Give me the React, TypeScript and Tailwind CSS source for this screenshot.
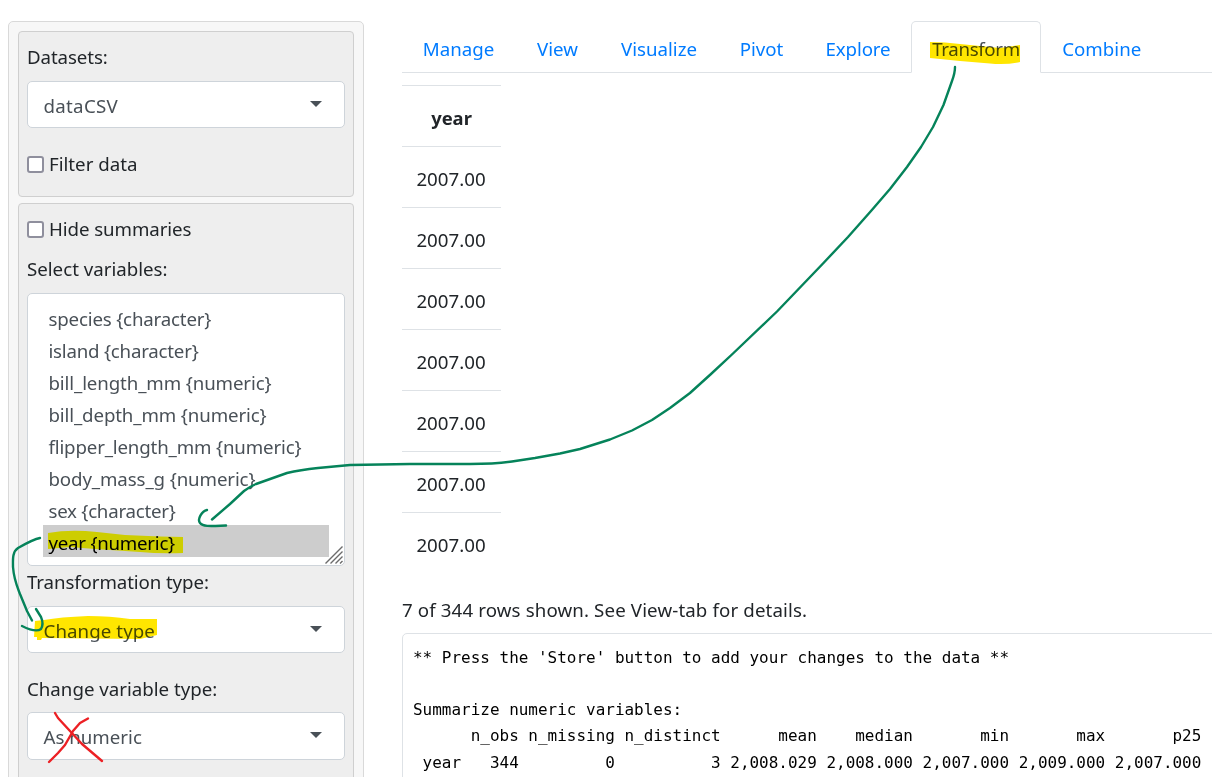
const variables = [
  { label: 'species {character}', track: 'tracking-[-0.18px]' },
  { label: 'island {character}', track: 'tracking-[-0.22px]' },
  { label: 'bill_length_mm {numeric}', track: 'tracking-[-0.12px]' },
  { label: 'bill_depth_mm {numeric}', track: 'tracking-[-0.13px]' },
  { label: 'flipper_length_mm {numeric}', track: 'tracking-[-0.16px]' },
  { label: 'body_mass_g {numeric}', track: 'tracking-[-0.12px]' },
  { label: 'sex {character}', track: 'tracking-[-0.26px]' },
];

const tabs = [
  { label: 'Manage', width: 'w-[113px]', track: '' },
  { label: 'View', width: 'w-[85px]', track: '' },
  { label: 'Visualize', width: 'w-[118px]', track: '' },
  { label: 'Pivot', width: 'w-[87px]', track: '' },
  { label: 'Explore', width: 'w-[106px]', track: 'tracking-[-0.1px]' },
  { label: 'Transform', width: 'w-[130px]', track: 'tracking-[-0.35px]', active: true },
  { label: 'Combine', width: 'w-[121.5px]', track: '' },
];

const years = ['2007.00', '2007.00', '2007.00', '2007.00', '2007.00', '2007.00', '2007.00'];

const summary = `** Press the 'Store' button to add your changes to the data **

Summarize numeric variables:
      n_obs n_missing n_distinct      mean    median       min       max       p25
 year   344         0          3 2,008.029 2,008.000 2,007.000 2,009.000 2,007.000`;

function SelectBox({ value, track = '', height = 'h-[47px]' }: { value: string; track?: string; height?: string }) {
  return (
    <div
      className={`flex ${height} shrink-0 items-center justify-between rounded-[5px] border border-[#ced4da] bg-white pl-[15.5px] pr-[22px] text-[#495057]`}
    >
      <span className={`pt-[2px] ${track}`}>{value}</span>
      <svg width="12" height="6" viewBox="0 0 12 6" className="mb-[2px]">
        <path d="M0 0H12L6 6Z" fill="#495057" />
      </svg>
    </div>
  );
}

function Check({ label, track = '' }: { label: string; track?: string }) {
  return (
    <label className="flex h-8 items-center">
      <span className="mr-[5px] size-[17px] rounded-[3px] border-2 border-[#8f8f9d] bg-white" />
      <span className={track}>{label}</span>
    </label>
  );
}

function Annotations() {
  return (
    <>
      <svg className="pointer-events-none absolute left-0 top-0 mix-blend-multiply" width="1212" height="777">
        <path d="M930 42L945 42.5L960 44L1000 48L1020 45V62Q1006 65 990 63.5L960 61L930 58Z" fill="#ffe600" />
        <path d="M48 533Q70 529 97 532L125 535L160 536.5L183 537V553Q160 554 140 552L95 549L70 547L48 549Z" fill="#ffff00" />
        <path d="M35 621L44 620Q60 617 88 616Q110 616 130 619L157 619V635L140 639L42 638L41 640H37L37 637H34Z" fill="#ffe600" />
      </svg>
      <svg
        className="pointer-events-none absolute left-0 top-0"
        width="1212"
        height="777"
        fill="none"
        strokeWidth="2.4"
        strokeLinecap="round"
        strokeLinejoin="round"
      >
        <g stroke="#05835a">
          <path d="M955 67Q955 73 952 81L943.5 105L933 127L921 147L907 167L890 189L871 211L848 237L823 263.5L777 311.5L733 353.5L711 374L690 393L670 408L652 420L632 430.5L610 439.5L580 449L560 453.5L535 458L512 461.5Q495 464 470 464H410L350 465L318 468Q300 470 287 473L256 484Q249 487 244 491L230 504L212 519.5" />
          <path d="M207 510C202 511 197 519 200 523C203 527 212 526 226 525.5" />
          <path d="M40 538C34 539 25 544 18 548C12 552 13 560 13 567C14 580 17 586 20 594L27 611L32 620.5" />
          <path d="M36 609L41 617Q44 624 41 629C37 632 28 629 22 626" />
        </g>
        <g stroke="#ec2024">
          <path d="M55 713L58 718L70 731L82 744L102 761" />
          <path d="M88 718.5L80 723L73 731L65 745L58 753L49 762" />
        </g>
      </svg>
    </>
  );
}

export default function App() {
  return (
    <div className="relative flex h-[777px] w-[1212px] overflow-hidden bg-white pl-2 pt-[21px] font-['Noto_Sans','Open_Sans',sans-serif] text-[18.7px] leading-8 text-[#212529] whitespace-nowrap">
      <aside className="flex h-[800px] w-[356px] shrink-0 flex-col gap-[6px] rounded-[5px] border border-[#d9d9d9] bg-[#f7f7f7] p-[9px]">
        <section className="h-[166px] shrink-0 rounded-[4px] border border-[#cfcfcf] bg-[#eee] px-2 pt-[9px]">
          <div className="mb-[8px] tracking-[-0.1px]">Datasets:</div>
          <SelectBox value="dataCSV" track="tracking-[0.3px]" />
          <div className="mt-[20px]">
            <Check label="Filter data" />
          </div>
        </section>
        <section className="h-[640px] shrink-0 rounded-[4px] border border-[#cfcfcf] bg-[#eee] px-2 pt-[9px]">
          <Check label="Hide summaries" track="tracking-[-0.08px]" />
          <div className="mb-[8px] mt-[8px]">Select variables:</div>
          <div className="relative h-[273px] rounded-[5px] border border-[#ced4da] bg-white px-[15px] py-[7px] text-[#495057]">
            {variables.map((v) => (
              <div key={v.label} className={`h-8 pl-[5.5px] pt-[2px] leading-8 ${v.track}`}>
                {v.label}
              </div>
            ))}
            <div className="h-8 bg-[#cdcdcd] pl-[5.5px] pt-[2px] leading-8 tracking-[-0.25px] text-black">{'year {numeric}'}</div>
            <svg className="absolute bottom-px right-px" width="18" height="18" stroke="#6b6b6b" strokeWidth="1.4">
              <path d="M0.5 17.5L17.5 0.5M5.5 17.5L17.5 5.5M10.5 17.5L17.5 10.5M15 17.5L17.5 15" />
            </svg>
          </div>
          <div className="mb-[8px] tracking-[-0.1px]">Transformation type:</div>
          <SelectBox value="Change type" track="tracking-[0.08px]" />
          <div className="mb-[7px] mt-[20px]">Change variable type:</div>
          <SelectBox value="As numeric" height="h-[48px]" />
        </section>
      </aside>

      <main className="ml-[38px] flex w-[820px] shrink-0 flex-col">
        <nav className="flex h-[52px] shrink-0 border-b border-[#dee2e6]">
          {tabs.map((t) => (
            <a
              key={t.label}
              className={
                t.active
                  ? `${t.width} ${t.track} h-[52px] rounded-t-[5px] border border-b-white border-[#dee2e6] bg-white pt-[11px] text-center text-[#495057]`
                  : `${t.width} ${t.track} pt-[12px] text-center text-[#007bff]`
              }
            >
              {t.label}
            </a>
          ))}
        </nav>
        <table className="mt-[12px] w-[99px] table-fixed border-separate border-spacing-0 text-center">
          <thead>
            <tr>
              <th className="h-[61px] border-t border-[#dee2e6] p-0 pt-[3px] text-[18.4px] font-bold">year</th>
            </tr>
          </thead>
          <tbody>
            {years.map((y, i) => (
              <tr key={i}>
                <td className="h-[61px] border-t border-[#dee2e6] p-0 pr-px pt-[4px]">{y}</td>
              </tr>
            ))}
          </tbody>
        </table>
        <p className="mb-[7px] mt-[21px] tracking-[0.13px]">7 of 344 rows shown. See View-tab for details.</p>
        <pre className="h-[200px] shrink-0 rounded-[5px] border border-[#dee2e6] pl-[10px] pt-[10.5px] font-['DejaVu_Sans_Mono',monospace] text-[15.98px] leading-[26.3px] text-black">
          {summary}
        </pre>
      </main>
      <Annotations />
    </div>
  );
}
